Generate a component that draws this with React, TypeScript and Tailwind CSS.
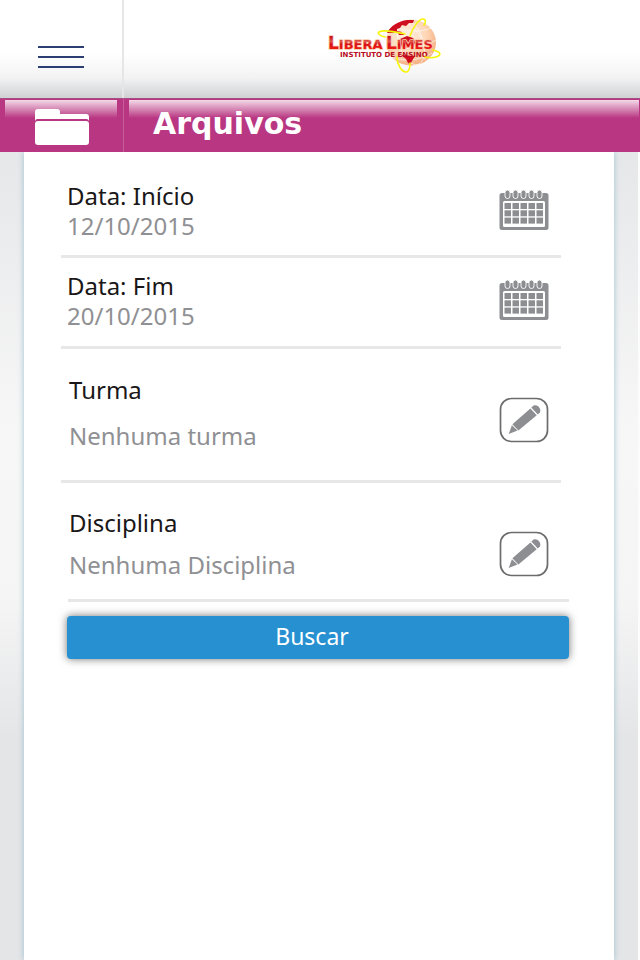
import type { ReactNode } from 'react'

function Logo() {
  return (
    <svg width="120" height="60" viewBox="0 0 120 60" role="img" aria-label="Libera Limes Instituto de Ensino">
      <defs>
        <radialGradient id="globe" cx="40%" cy="35%" r="70%">
          <stop offset="0" stopColor="#fff1e4" />
          <stop offset="0.6" stopColor="#fdd5b4" />
          <stop offset="1" stopColor="#f3a878" />
        </radialGradient>
        <linearGradient id="brand" x1="0" y1="0" x2="0" y2="1">
          <stop offset="0.2" stopColor="#c8141c" />
          <stop offset="0.42" stopColor="#e0584c" />
          <stop offset="0.56" stopColor="#d8101a" />
          <stop offset="0.8" stopColor="#ee1c10" />
        </linearGradient>
      </defs>
      <ellipse cx="87" cy="26.5" rx="25" ry="23" fill="url(#globe)" />
      <g fill="none" stroke="#fff" strokeWidth="0.8" opacity="0.8">
        <ellipse cx="87" cy="26.5" rx="12" ry="23" transform="rotate(-18 87 26.5)" />
        <path d="M70 10C82 17 98 16 107 12M62 27c15 8 35 6 50-3M67 41c12 5 28 4 41-4M80 5c14 8 22 22 21 39" />
      </g>
      <path
        d="M63 17c3-7 12-12 20-13l7 0-1 3-4 0-3 3-4-1-2 3-3 1 0 2 5 1-2 2-4-2-3 1zM74 17l5 0 1 2-5 0zM76 23l7-3 6 2 3 5-6 4-8 1zM77 39l14 1-3 5-2 3-2-1-2-4z"
        fill="#cf0f1f"
      />
      <g
        className="[paint-order:stroke]"
        fill="url(#brand)"
        stroke="#f9c9a8"
        strokeWidth="1.6"
        strokeLinejoin="round"
        fontFamily="'DejaVu Sans', sans-serif"
        fontWeight="700"
      >
        <text x="4" y="33" fontSize="17">
          L<tspan fontSize="13">IBERA</tspan>
        </text>
        <text x="62" y="33" fontSize="17">
          L<tspan fontSize="13">IMES</tspan>
        </text>
      </g>
      <text x="16" y="41" fontSize="7" fontFamily="'DejaVu Sans', sans-serif" fontWeight="700" fill="#b80d1c">
        INSTITUTO DE ENSINO
      </text>
      <g fill="none" stroke="#f5f50a" strokeWidth="1.6" strokeLinecap="round">
        <path d="M61 21c-5-1-8-4-6-5 4-3 17 0 26 2" />
        <path d="M86 20c3-9 9-17 13-17 3 0 3 3 1 6" />
        <path d="M109 34c8 2 9 5 3 7-3 1-7 1-11 0" />
        <path d="M73 41c0 8 5 15 9 15 3 0 4-4 4-9" />
      </g>
    </svg>
  )
}

function FolderIcon() {
  return (
    <svg width="56" height="38" viewBox="0 0 56 38" fill="#fff" aria-hidden="true">
      <path d="M1 11V4a3 3 0 0 1 3-3h19a3 3 0 0 1 3 3v2h26a3 3 0 0 1 3 3v4c-1-2-2-2-3-2H4c-1 0-2 0-3 2z" />
      <rect x="1" y="13" width="54" height="24" rx="3" />
    </svg>
  )
}

function CalendarIcon() {
  return (
    <svg width="50" height="42" viewBox="0 0 50 42" aria-hidden="true">
      <rect x="0.5" y="4" width="49" height="37" rx="2.5" fill="#8d8e92" />
      <rect x="4" y="12" width="42" height="26" rx="1.5" fill="#fff" />
      {[6, 14, 22, 30, 38].map((x) => (
        <g key={x} fill="#8d8e92">
          <rect x={x} y="1" width="5" height="8.5" rx="2.5" stroke="#fff" strokeWidth="0.9" />
          <rect x={x - 0.5} y="14" width="6.5" height="6" />
          <rect x={x - 0.5} y="21.3" width="6.5" height="6" />
          <rect x={x - 0.5} y="28.6" width="6.5" height="6" />
        </g>
      ))}
    </svg>
  )
}

function EditIcon() {
  return (
    <svg width="50" height="46" viewBox="0 0 50 46" aria-hidden="true">
      <rect x="1.5" y="1.5" width="47" height="43" rx="11" fill="#fff" stroke="#6b6c6e" strokeWidth="1.7" />
      <g fill="#8d8e92">
        <path d="M9.7 37l3.2-8.7 5.6 5.3z" />
        <path d="M13.4 27.2l18-15.7 6.3 6.8L19.4 33.6z" />
        <path d="M32.3 10.6l2-1.8c3.4-2 8.3 2.4 6.7 6.4l-2.2 2.2z" />
      </g>
    </svg>
  )
}

type FieldProps = {
  id: string
  label: string
  value: string
  action: string
  icon: ReactNode
  className: string
  labelClass?: string
}

function Field({ id, label, value, action, icon, className, labelClass = '' }: FieldProps) {
  return (
    <div className={`flex justify-between border-b-3 border-[#e7e7e8] ${className}`}>
      <div className="flex min-w-0 flex-1 flex-col">
        <label htmlFor={id} className={`text-2xl leading-[30px] text-[#1a1718] ${labelClass}`}>
          {label}
        </label>
        <input
          id={id}
          type="text"
          readOnly
          defaultValue={value}
          className="h-[30px] w-full text-2xl leading-[30px] text-[#8f9093] outline-none"
        />
      </div>
      <button type="button" aria-label={action} className="shrink-0 cursor-pointer self-center">
        {icon}
      </button>
    </div>
  )
}

export default function App() {
  return (
    <div className="flex min-h-screen flex-col bg-[linear-gradient(#e6e7e9_150px,#f7f7f7_430px,#f5f5f5_600px,#e4e5e7_740px)] font-['Noto_Sans',sans-serif]">
      <header className="flex h-[98px] bg-[linear-gradient(#fff_55%,#f2f2f3_80%,#cfd1d3)]">
        <div className="flex w-[124px] shrink-0 justify-center border-r-2 border-[#e6e6e7] pt-4">
          <button type="button" aria-label="Menu" className="flex h-[82px] w-[46px] cursor-pointer flex-col justify-center gap-2">
            <span className="h-0.5 w-full bg-[#2c3e72]" />
            <span className="h-0.5 w-full bg-[#2c3e72]" />
            <span className="h-0.5 w-full bg-[#2c3e72]" />
          </button>
        </div>
        <div className="flex flex-1 justify-center pt-4 pl-1">
          <Logo />
        </div>
      </header>

      <div className="z-10 flex h-[54px] border-t border-[#a84c82] bg-[#b93782]">
        <div className="flex w-[124px] shrink-0 border-r border-[#c75d9b] pt-px pr-1.5 pl-[5px]">
          <div className="flex flex-1 justify-center bg-[linear-gradient(#f3d9e8,#b93782_18px)] pt-2 pl-0.5">
            <FolderIcon />
          </div>
        </div>
        <div className="flex-1 pt-px pr-px pl-[5px]">
          <div className="h-full bg-[linear-gradient(#f3d9e8,#b93782_18px)] pl-6">
            <h1 className="pt-1.5 font-['DejaVu_Sans',sans-serif] text-[30px] leading-9 font-bold text-white">Arquivos</h1>
          </div>
        </div>
      </div>

      <div className="flex flex-1 border-r-2 border-[#fcfcfc]">
        <main className="mx-6 flex-1 bg-white shadow-[0_0_6px_#9fc2d0]">
          <form className="pr-[45px] pl-[37px]" onSubmit={(e) => e.preventDefault()}>
            <Field
              id="inicio"
              label="Data: Início"
              value="12/10/2015"
              action="Escolher data de início"
              icon={<CalendarIcon />}
              className="mr-2 h-[106px] pt-[29px] pr-3 pb-4 pl-1.5"
            />
            <Field
              id="fim"
              label="Data: Fim"
              value="20/10/2015"
              action="Escolher data de fim"
              icon={<CalendarIcon />}
              className="mr-2 h-[91px] pt-[13px] pr-3 pb-[18px] pl-1.5"
            />
            <Field
              id="turma"
              label="Turma"
              value="Nenhuma turma"
              action="Editar turma"
              icon={<EditIcon />}
              className="mr-2 h-[134px] pt-[26px] pr-3 pb-4 pl-2"
              labelClass="mb-4"
            />
            <Field
              id="disciplina"
              label="Disciplina"
              value="Nenhuma Disciplina"
              action="Editar disciplina"
              icon={<EditIcon />}
              className="ml-[7px] h-[119px] pt-[25px] pr-5 pl-px"
              labelClass="mb-3"
            />
            <button
              type="submit"
              className="mt-3.5 ml-1.5 flex h-[43px] w-[calc(100%-6px)] cursor-pointer items-center justify-center rounded bg-[#2690d1] pr-3 pb-0.5 text-[23px] text-white shadow-[0_0_8px_rgba(0,0,0,0.55)]"
            >
              Buscar
            </button>
          </form>
        </main>
      </div>
    </div>
  )
}
